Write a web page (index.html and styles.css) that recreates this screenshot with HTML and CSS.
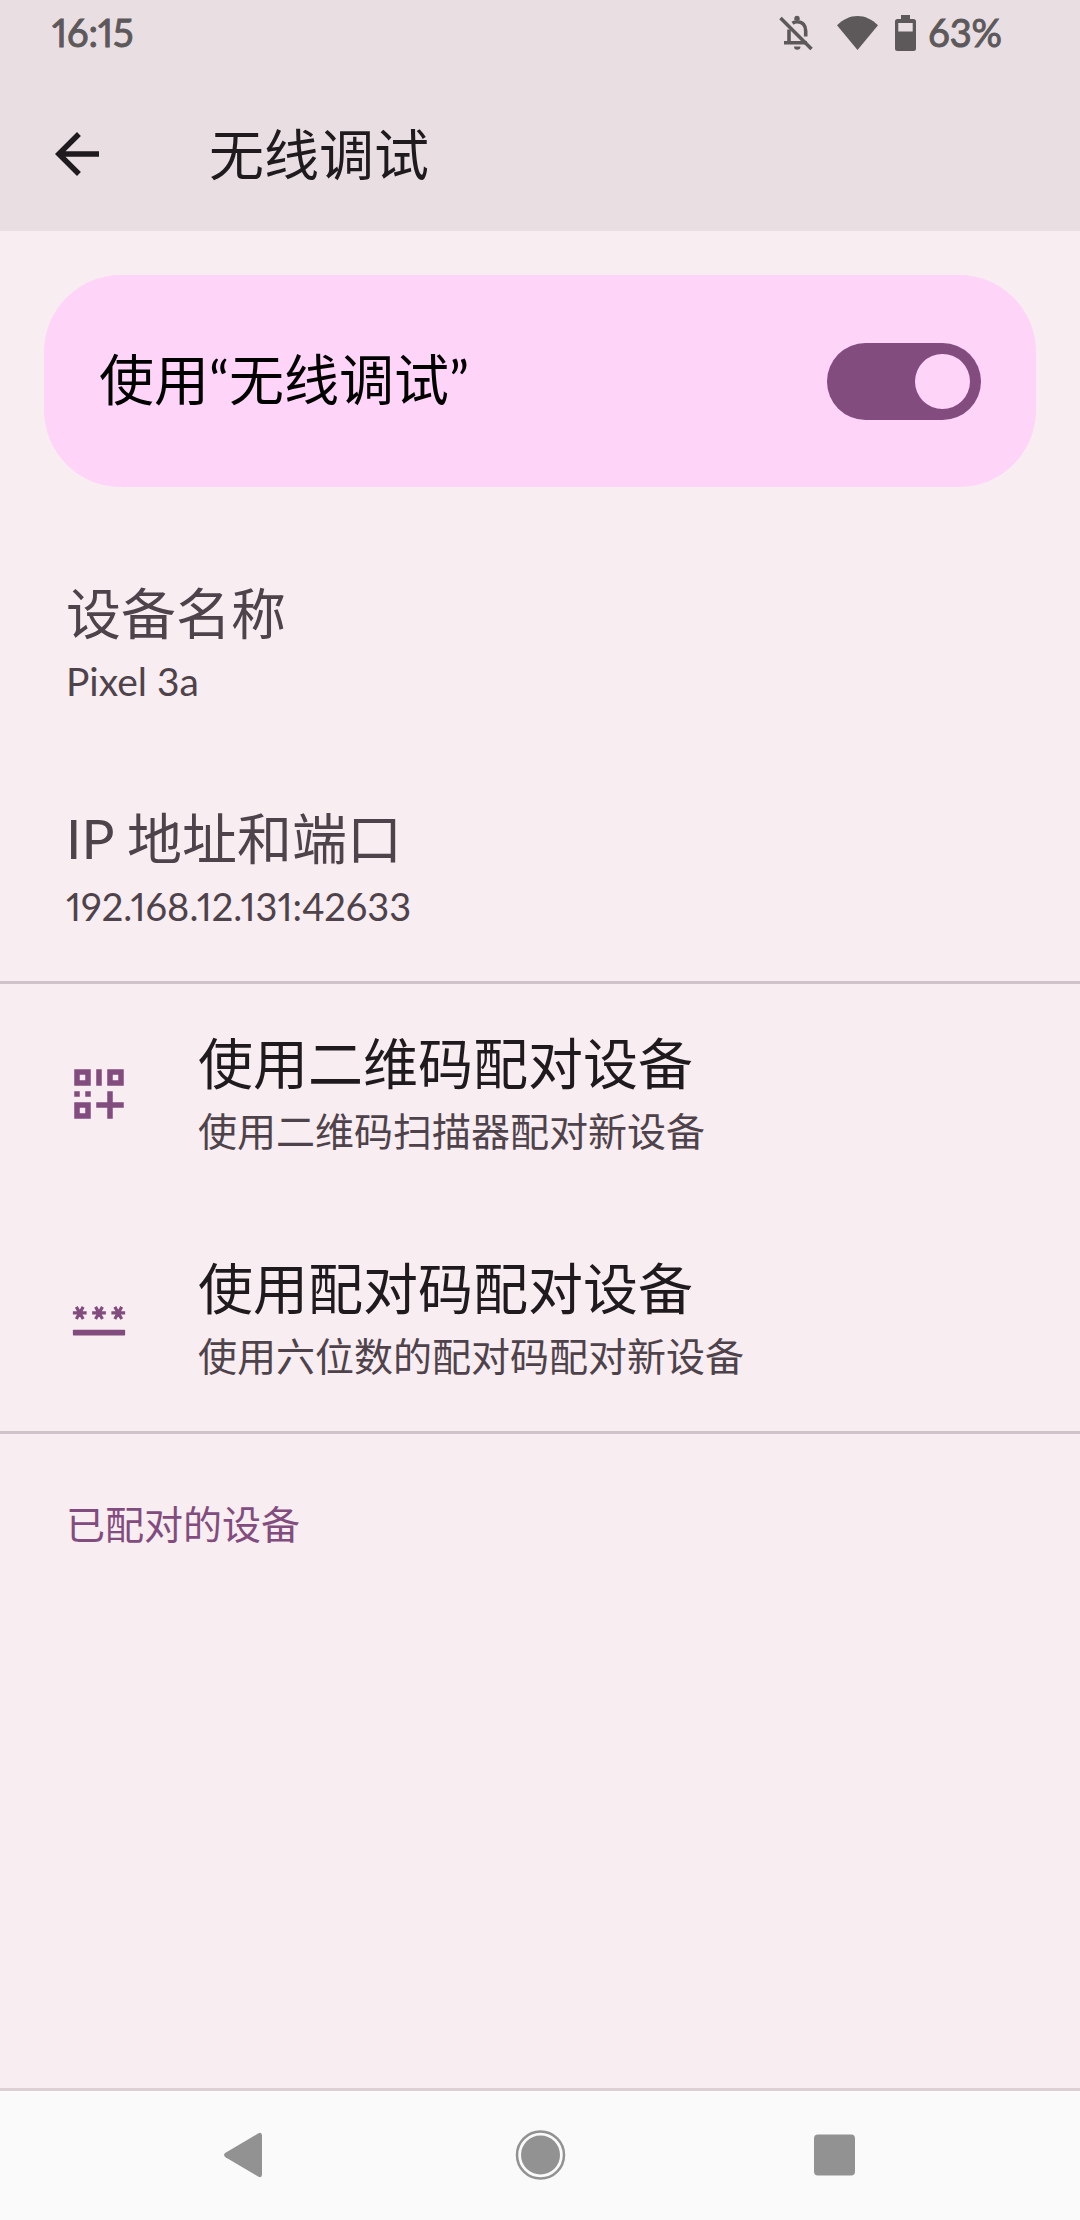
FILE: index.html
```html
<!DOCTYPE html>
<html lang="zh-CN">
<head>
<meta charset="utf-8">
<meta name="viewport" content="width=device-width, initial-scale=1">
<title>无线调试</title>
<link rel="stylesheet" href="styles.css">
</head>
<body>
<header class="top">
  <div class="status">
    <span class="clock">16:15</span>
    <div class="status-icons">
      <svg class="bell" viewBox="0 0 34 36" aria-hidden="true">
        <g fill="none" stroke="currentColor" stroke-width="3.6">
          <path d="M10 29V14.500M13.500 8.200Q15.500 6.700 18 6.700C23.500 6.700 26.700 10.500 26.700 16V21.500M5 27.800H28"/>
          <path d="M1.500 3L32.500 34"/>
        </g>
        <path d="M15.300 5V3.400a2.700 2.700 0 0 1 5.400 0V5zM15 31.500h6.500a3.200 3.200 0 0 1-6.500 0z" fill="currentColor"/>
      </svg>
      <svg class="wifi" viewBox="0 0 41 34" aria-hidden="true"><path d="M20.500 34L0 9.300C6 3.300 13 0 20.500 0S35 3.300 41 9.300z" fill="currentColor"/></svg>
      <svg class="battery" viewBox="0 0 21 36" aria-hidden="true"><path fill-rule="evenodd" d="M6 0h9v4h3.500Q21 4 21 6.500v27Q21 36 18.500 36h-16Q0 36 0 33.500v-27Q0 4 2.500 4H6zM3.300 8v8.500h14.400V8z" fill="currentColor"/></svg>
      <span class="percent">63%</span>
    </div>
  </div>
  <div class="appbar">
    <button class="back" type="button" aria-label="返回">
      <svg viewBox="0 0 24 24" aria-hidden="true"><path d="M20 11H7.830l5.590-5.590L12 4l-8 8 8 8 1.410-1.410L7.830 13H20z" fill="currentColor"/></svg>
    </button>
    <h1 class="title">无线调试</h1>
  </div>
</header>
<main class="content">
  <label class="main-switch">
    <span class="main-switch-text">使用“无线调试”</span>
    <input class="switch" type="checkbox" role="switch" checked>
  </label>
  <section class="group">
    <div class="row info">
      <span class="texts"><span class="row-title">设备名称</span><span class="summary">Pixel 3a</span></span>
    </div>
    <div class="row info">
      <span class="texts"><span class="row-title">IP 地址和端口</span><span class="summary address">192.168.12.131:42633</span></span>
    </div>
  </section>
  <section class="group divided">
    <button class="row" type="button">
      <svg class="row-icon" viewBox="0 0 24 24" aria-hidden="true"><path fill-rule="evenodd" fill="currentColor" d="M3 3h6v6H3zM5 5v2h2V5zM11 3h2v6h-2zM15 3h6v6h-6zM17 5v2h2V5zM3 11h2v2H3zM7 11h2v2H7zM3 15h6v6H3zM5 17v2h2v-2zM15 11h2v4h4v2h-4v4h-2v-4h-4v-2h4z"/></svg>
      <span class="texts"><span class="row-title">使用二维码配对设备</span><span class="summary">使用二维码扫描器配对新设备</span></span>
    </button>
    <button class="row" type="button">
      <svg class="row-icon" viewBox="0 0 24 24" aria-hidden="true">
        <path d="M2.500 9.800h5M3.750 7.600l2.500 4.400M6.250 7.600L3.750 12M9.500 9.800h5M10.750 7.600l2.500 4.400M13.250 7.600L10.750 12M16.500 9.800h5M17.750 7.600l2.500 4.400M20.250 7.600L17.750 12" fill="none" stroke="currentColor" stroke-width="1.15"/>
        <rect x="2.500" y="15.900" width="19" height="2.100" rx=".3" fill="currentColor"/>
      </svg>
      <span class="texts"><span class="row-title">使用配对码配对设备</span><span class="summary">使用六位数的配对码配对新设备</span></span>
    </button>
  </section>
  <section class="group divided">
    <h2 class="category">已配对的设备</h2>
  </section>
</main>
<nav class="navbar">
  <button class="nav-button" type="button" aria-label="返回"><svg viewBox="0 0 66 66" aria-hidden="true"><path d="M12.500 30.800Q9.500 33 12.500 35.200L45.500 54.700Q48.700 56.200 49 52.500V13.500Q48.700 9.800 45.500 11.300z" fill="currentColor"/></svg></button>
  <button class="nav-button" type="button" aria-label="主屏幕"><svg viewBox="0 0 66 66" aria-hidden="true"><circle cx="33.500" cy="33" r="23.500" fill="none" stroke="currentColor" stroke-width="2.500"/><circle cx="33.500" cy="33" r="19.500" fill="currentColor"/></svg></button>
  <button class="nav-button" type="button" aria-label="最近应用"><svg viewBox="0 0 66 66" aria-hidden="true"><rect x="13" y="12.500" width="41" height="41" rx="4" fill="currentColor"/></svg></button>
</nav>
</body>
</html>
```
FILE: styles.css
```css
* {
  box-sizing: border-box;
}

body {
  display: flex;
  flex-direction: column;
  min-height: 100vh;
  margin: 0;
  background: #f8edf1;
  color: #1f1a1d;
  font-family: Lato, "Noto Sans CJK SC", sans-serif;
  font-variant-numeric: proportional-nums;
}

button {
  border: 0;
  padding: 0;
  background: none;
  color: inherit;
  font: inherit;
  text-align: left;
}

svg {
  display: block;
}

.top {
  background: #e9dfe3;
}

.status {
  display: flex;
  align-items: center;
  justify-content: space-between;
  height: 66px;
  padding: 0 78px 0 52px;
  color: #5d595b;
  font-size: 38px;
  line-height: 44px;
  -webkit-text-stroke: 1px currentColor;
}

.status-icons {
  display: flex;
  align-items: center;
}

.bell {
  width: 34px;
  height: 36px;
  margin-right: 24px;
}

.wifi {
  width: 41px;
  height: 34px;
  margin-right: 17px;
}

.battery {
  width: 21px;
  height: 36px;
  margin-right: 12px;
}

.clock,
.percent {
  padding-bottom: 2px;
}

.appbar {
  display: flex;
  align-items: center;
  gap: 99px;
  height: 165px;
  padding: 11px 44px 0;
}

.back svg,
.row-icon {
  width: 66px;
  height: 66px;
}

.title,
.main-switch-text,
.row-title {
  margin: 0;
  font-size: 55px;
  font-weight: 400;
  line-height: 64px;
}

.main-switch-text {
  padding-bottom: 4px;
}

.content {
  flex: 1;
}

.main-switch {
  display: flex;
  align-items: center;
  justify-content: space-between;
  min-height: 212px;
  margin: 44px;
  padding: 0 55px;
  border-radius: 77px;
  background: #fed4f9;
  color: #000;
}

.switch {
  appearance: none;
  display: flex;
  justify-content: flex-end;
  width: 154px;
  height: 77px;
  margin: 0;
  padding: 11px;
  border-radius: 39px;
  background: #824c7e;
}

.switch::before {
  content: "";
  width: 55px;
  height: 55px;
  border-radius: 50%;
  background: #fed4f9;
}

.switch:not(:checked) {
  justify-content: flex-start;
}

.divided {
  border-top: 3px solid #cfc3c9;
}

.row {
  display: flex;
  align-items: center;
  gap: 66px;
  width: 100%;
  min-height: 225px;
  padding: 0 66px;
}

.divided .row:first-child {
  min-height: 222px;
  padding-bottom: 3px;
}

.texts {
  display: flex;
  flex-direction: column;
  gap: 10px;
}

.row-icon,
.category {
  color: #824c7e;
}

.summary {
  color: #4f434b;
  font-size: 39px;
  line-height: 52px;
}

.address {
  font-size: 38px;
}

.info {
  color: #4f434b;
}

.category {
  margin: 0;
  padding: 64px 66px 22px;
  font-size: 39px;
  font-weight: 400;
  line-height: 52px;
}

.navbar {
  display: flex;
  justify-content: center;
  align-items: center;
  height: 132px;
  padding-bottom: 2px;
  border-top: 3px solid #ddd0d5;
  background: #fafafa;
  color: #929292;
}

.nav-button {
  display: flex;
  justify-content: center;
  width: 294px;
}

.nav-button svg {
  width: 66px;
  height: 66px;
}
```
